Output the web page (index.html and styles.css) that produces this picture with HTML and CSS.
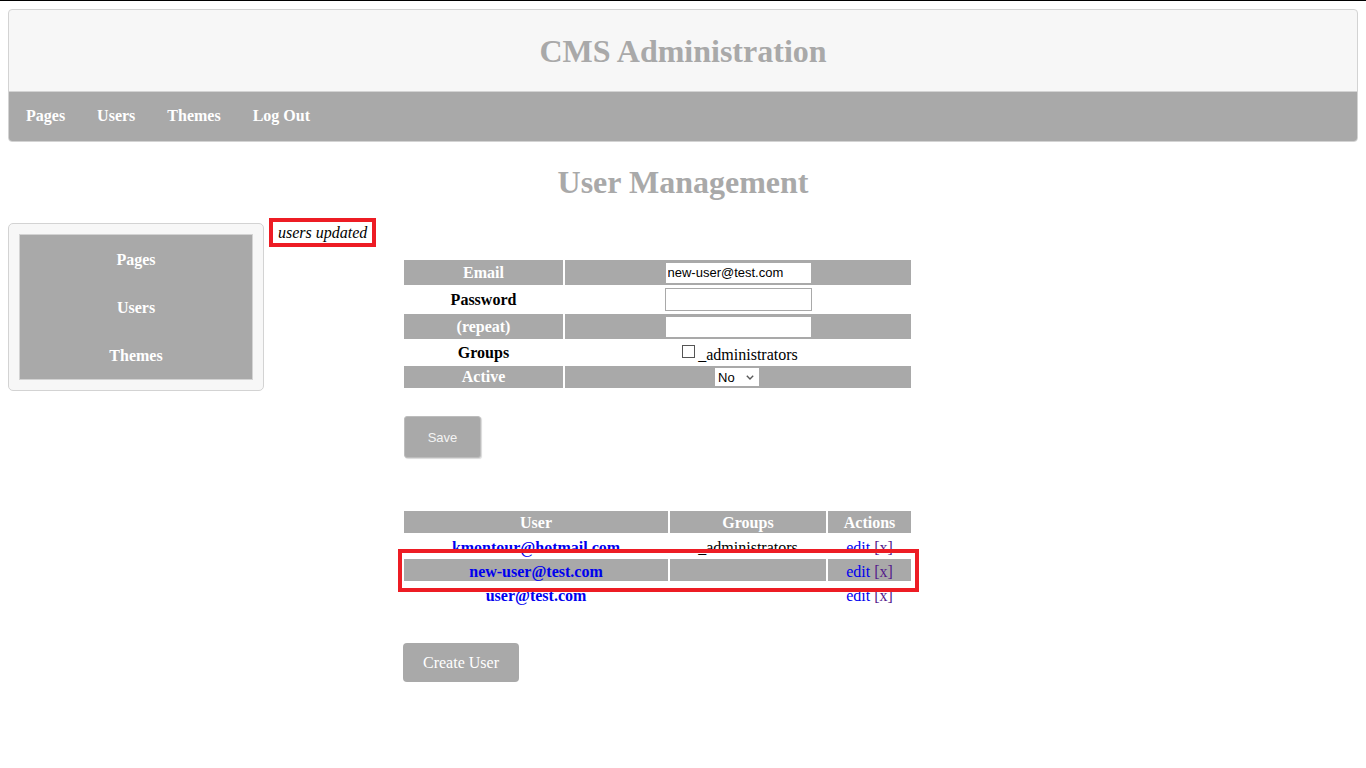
FILE: index.html
```html
<!DOCTYPE html>
<html lang="en">
<head>
<meta charset="utf-8">
<title>CMS Administration - User Management</title>
<link rel="stylesheet" href="styles.css">
</head>
<body>
<header class="site-header">
  <div class="site-title"><h1>CMS Administration</h1></div>
  <nav class="top-nav">
    <a href="#">Pages</a>
    <a href="#">Users</a>
    <a href="#">Themes</a>
    <a href="#">Log Out</a>
  </nav>
</header>

<h2 class="page-title">User Management</h2>

<div class="layout">
  <aside class="sidebar">
    <nav class="side-menu">
      <a href="#">Pages</a>
      <a href="#">Users</a>
      <a href="#">Themes</a>
    </nav>
  </aside>

  <main class="main">
    <div class="flash">users updated</div>

    <div class="content">
      <form class="user-form">
        <table class="form-table">
          <tr class="shade r25">
            <th class="lbl">Email</th>
            <td class="val"><input class="text-input" type="text" value="new-user@test.com"></td>
          </tr>
          <tr class="r25">
            <th class="lbl">Password</th>
            <td class="val"><input class="text-input" type="password"></td>
          </tr>
          <tr class="shade r25">
            <th class="lbl">(repeat)</th>
            <td class="val"><input class="text-input" type="password"></td>
          </tr>
          <tr class="r23">
            <th class="lbl">Groups</th>
            <td class="val"><label class="group-opt"><input class="check" type="checkbox">_administrators</label></td>
          </tr>
          <tr class="shade r22">
            <th class="lbl">Active</th>
            <td class="val">
              <span class="select-wrap">
                <select class="select"><option>No</option><option>Yes</option></select>
                <svg class="chev" width="8" height="5" viewBox="0 0 8 5"><path d="M0.8 0.8 L4 4 L7.2 0.8" fill="none" stroke="#5a5a5a" stroke-width="1.4"/></svg>
              </span>
            </td>
          </tr>
        </table>
        <button type="button" class="save-btn">Save</button>
      </form>

      <div class="users-wrap">
        <table class="users-table">
          <tr class="shade head">
            <th class="c-user">User</th>
            <th class="c-groups">Groups</th>
            <th class="c-actions">Actions</th>
          </tr>
          <tr>
            <td><a class="user-link" href="#">kmontour@hotmail.com</a></td>
            <td>_administrators</td>
            <td><a class="act" href="#">edit</a> <a class="act visited" href="#">[x]</a></td>
          </tr>
          <tr class="shade">
            <td><a class="user-link" href="#">new-user@test.com</a></td>
            <td></td>
            <td><a class="act" href="#">edit</a> <a class="act visited" href="#">[x]</a></td>
          </tr>
          <tr>
            <td><a class="user-link" href="#">user@test.com</a></td>
            <td></td>
            <td><a class="act" href="#">edit</a> <a class="act visited" href="#">[x]</a></td>
          </tr>
        </table>
        <div class="highlight"></div>
      </div>

      <button type="button" class="create-btn">Create User</button>
    </div>
  </main>
</div>
</body>
</html>
```

FILE: styles.css
```css
html {
  border-top: 1px solid #000;
  background: #fff;
}

body {
  margin: 8px;
  font-family: "Liberation Serif", "Times New Roman", serif;
  font-size: 16px;
  color: #000;
}

/* Header */
.site-header {
  border: 1px solid #d3d3d3;
  border-radius: 4px;
  background: #f7f7f7;
  overflow: hidden;
}

.site-title {
  height: 81px;
  display: flex;
  align-items: center;
  justify-content: center;
}

.site-title h1 {
  margin: 0;
  padding-top: 1px;
  font-size: 32px;
  font-weight: bold;
  color: #a9a9a9;
  line-height: 37px;
}

.top-nav {
  border-top: 1px solid #d3d3d3;
  background: #a9a9a9;
  height: 50px;
  box-sizing: border-box;
  display: flex;
  align-items: center;
  padding-left: 17px;
  padding-bottom: 1px;
  gap: 32px;
}

.top-nav a {
  color: #fff;
  font-weight: bold;
  text-decoration: none;
}

/* Page title */
.page-title {
  margin: 22px 0 17px;
  text-align: center;
  font-size: 32px;
  line-height: 37px;
  color: #a9a9a9;
}

/* Layout */
.layout {
  display: flex;
  align-items: flex-start;
}

.sidebar {
  margin-top: 5px;
  width: 256px;
  box-sizing: border-box;
  border: 1px solid #d3d3d3;
  border-radius: 5px;
  background: #f7f7f7;
  padding: 10px;
  flex: none;
}

.side-menu {
  border: 1px solid #d3d3d3;
  background: #a9a9a9;
}

.side-menu a {
  display: block;
  height: 48px;
  box-sizing: border-box;
  padding-top: 1px;
  line-height: 48px;
  text-align: center;
  color: #fff;
  font-weight: bold;
  text-decoration: none;
}

.main {
  margin-left: 5px;
  flex: 1;
}

.flash {
  width: fit-content;
  border: 4px solid #ed1c24;
  padding: 2px 5px 1px;
  line-height: 18px;
  font-style: italic;
}

.content {
  margin-left: 133px;
}

/* Form table */
.form-table {
  margin-top: 11px;
  border-collapse: separate;
  border-spacing: 2px;
}

.form-table th,
.form-table td {
  padding: 0;
  vertical-align: middle;
  text-align: center;
}

.form-table .lbl {
  width: 159px;
  font-weight: bold;
}

.form-table .val {
  width: 346px;
}

.r25 th, .r25 td { height: 25px; }
.r23 th, .r23 td { height: 23px; }
.r22 th, .r22 td { height: 22px; }

.shade th,
.shade td {
  background: #a9a9a9;
}

.shade th {
  color: #fff;
}

.text-input {
  box-sizing: border-box;
  width: 147px;
  height: 23px;
  margin: 0;
  padding: 1px 2px;
  border: 1px solid #a9a9a9;
  background: #fff;
  font-family: "Liberation Sans", Arial, sans-serif;
  font-size: 13px;
  color: #000;
  display: inline-block;
  vertical-align: middle;
}

.shade .text-input {
  height: 22px;
}

.group-opt {
  white-space: nowrap;
}

.check {
  appearance: none;
  -webkit-appearance: none;
  box-sizing: border-box;
  width: 13px;
  height: 13px;
  margin: 3px 3px 3px 4px;
  border: 1px solid #555;
  background: #fff;
  vertical-align: -1px;
}

.select-wrap {
  position: relative;
  display: inline-block;
  vertical-align: middle;
  margin-left: -2px;
}

.select {
  appearance: none;
  -webkit-appearance: none;
  box-sizing: border-box;
  width: 46px;
  height: 20px;
  margin: 0;
  padding: 0 0 0 3px;
  border: 1px solid #a9a9a9;
  border-radius: 0;
  background: #fff;
  font-family: "Liberation Sans", Arial, sans-serif;
  font-size: 13px;
  color: #000;
  display: block;
}

.chev {
  position: absolute;
  right: 6px;
  top: 8px;
  pointer-events: none;
}

.save-btn {
  display: block;
  margin-top: 26px;
  margin-left: 2px;
  width: 77px;
  height: 42px;
  box-sizing: border-box;
  background: #a9a9a9;
  border: 1px solid #bdbdbd;
  border-radius: 3px;
  box-shadow: 1px 1px 1px rgba(0, 0, 0, 0.15);
  color: #f4f4f4;
  font-family: "Liberation Sans", Arial, sans-serif;
  font-size: 13px;
  padding: 0;
}

/* Users table */
.users-wrap {
  position: relative;
  margin-top: 51px;
  width: fit-content;
}

.users-table {
  border-collapse: separate;
  border-spacing: 2px;
}

.users-table th,
.users-table td {
  height: 22px;
  box-sizing: border-box;
  padding: 4px 0 0;
  line-height: 18px;
  text-align: center;
  vertical-align: top;
}

.users-table .head th {
  padding-top: 3px;
}

.users-table .c-user { width: 264px; }
.users-table .c-groups { width: 156px; }
.users-table .c-actions { width: 83px; }

.user-link {
  color: #0000ee;
  font-weight: bold;
  text-decoration: none;
}

.act {
  color: #0000ee;
  text-decoration: none;
}

.act.visited {
  color: #551a8b;
}

.highlight {
  position: absolute;
  left: -4px;
  top: 40px;
  width: 521px;
  height: 43px;
  box-sizing: border-box;
  border: 4px solid #ed1c24;
  pointer-events: none;
}

.create-btn {
  display: block;
  margin-top: 36px;
  margin-left: 1px;
  width: 116px;
  height: 39px;
  border: none;
  border-radius: 4px;
  background: #a9a9a9;
  color: #fff;
  font-family: "Liberation Serif", "Times New Roman", serif;
  font-size: 16px;
  padding: 0;
}
```
